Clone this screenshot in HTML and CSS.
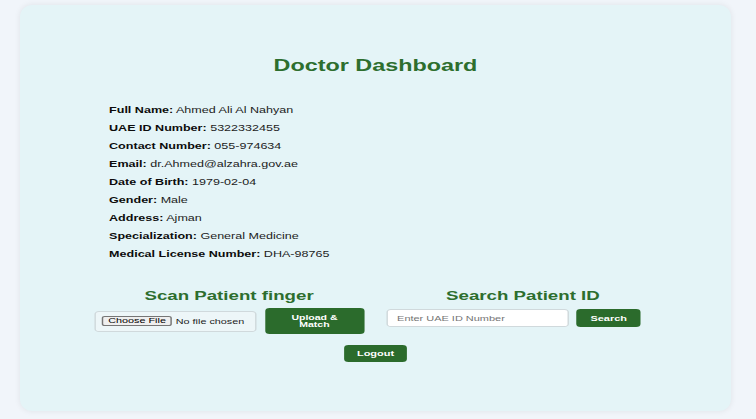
FILE: index.html
```html
<!DOCTYPE html>
<html>
<head>
<meta charset="utf-8">
<link rel="stylesheet" href="styles.css">
</head>
<body>
<div class="card">
  <div class="content">
    <h1 class="title">Doctor Dashboard</h1>
    <div class="info">
      <p><b>Full Name:</b> Ahmed Ali Al Nahyan</p>
      <p><b>UAE ID Number:</b> 5322332455</p>
      <p><b>Contact Number:</b> 055-974634</p>
      <p><b>Email:</b> dr.Ahmed@alzahra.gov.ae</p>
      <p><b>Date of Birth:</b> 1979-02-04</p>
      <p><b>Gender:</b> Male</p>
      <p><b>Address:</b> Ajman</p>
      <p><b>Specialization:</b> General Medicine</p>
      <p><b>Medical License Number:</b> DHA-98765</p>
    </div>
    <div class="sections">
      <div class="section left">
        <h2>Scan Patient finger</h2>
        <div class="row">
          <div class="file"><span class="choose">Choose File</span><span class="nofile">No file chosen</span></div>
          <button class="btn upload">Upload &amp;<br>Match</button>
        </div>
      </div>
      <div class="section right">
        <h2>Search Patient ID</h2>
        <div class="row">
          <input class="search-input" type="text" placeholder="Enter UAE ID Number">
          <button class="btn search">Search</button>
        </div>
      </div>
    </div>
    <div class="logout-row"><button class="btn logout">Logout</button></div>
  </div>
</div>
</body>
</html>
```
FILE: styles.css
```css
html, body {
  margin: 0;
  padding: 0;
  background: #f1f5fa;
  font-family: "Liberation Sans", Arial, sans-serif;
}
body {
  padding: 5px 25px 8px 20px;
}
.card {
  background: #e4f4f7;
  border-radius: 12px;
  box-shadow: 0 0 6px rgba(0, 0, 0, 0.08);
  height: 406px;
  box-sizing: border-box;
  padding-top: 52px;
  overflow: hidden;
}
/* the reference is rendered horizontally stretched */
.content {
  width: 487px;
  transform: scaleX(1.46);
  transform-origin: 0 0;
}
.title {
  margin: 0;
  text-align: center;
  color: #2d6e2e;
  font-size: 16px;
  font-weight: bold;
  line-height: 18px;
}
.info {
  margin-top: 26px;
  padding-left: 61px;
}
.info p {
  margin: 0;
  font-size: 8.6px;
  line-height: 18px;
  color: #1c1c1c;
}
.info b {
  color: #0c0c0c;
}
.sections {
  display: flex;
  margin-top: 25px;
  padding-left: 50.7px;
}
.section {
  display: flex;
  flex-direction: column;
}
.section h2 {
  margin: 0;
  color: #2d6e2e;
  font-size: 12.8px;
  line-height: 15px;
  text-align: center;
}
.left {
  width: 185px;
}
.right {
  width: 186px;
  margin-left: 15.8px;
}
.row {
  display: flex;
  align-items: center;
}
.left .row {
  gap: 5.5px;
  margin-top: 5px;
}
.right .row {
  gap: 4.8px;
  margin-top: 6px;
}
.file {
  width: 111.6px;
  height: 21px;
  box-sizing: border-box;
  border: 1px solid #d0d9dc;
  border-radius: 3px;
  background: #edf6f8;
  display: flex;
  align-items: center;
  padding-left: 4.3px;
  font-size: 7.4px;
  color: #222;
}
.choose {
  background: #efefef;
  border: 1px solid #767676;
  border-radius: 2px;
  padding: 0 3.5px;
  height: 8px;
  line-height: 8px;
  color: #000;
  margin-right: 2.3px;
}
.btn {
  background: #2b6b2c;
  color: #fff;
  border: none;
  border-radius: 3px;
  font-family: "Liberation Sans", Arial, sans-serif;
  font-weight: bold;
  font-size: 7.5px;
  padding: 0;
  cursor: pointer;
}
.upload {
  width: 67.8px;
  height: 26px;
  font-size: 7.2px;
  line-height: 7.5px;
}
.search-input {
  width: 124.7px;
  height: 18px;
  box-sizing: border-box;
  border: 1px solid #d0d9dc;
  border-radius: 3px;
  background: #fff;
  padding: 0 5.8px;
  font-size: 7.5px;
  font-family: "Liberation Sans", Arial, sans-serif;
}
.search-input::placeholder {
  color: #757575;
}
.search {
  width: 44.5px;
  height: 18px;
}
.logout-row {
  display: flex;
  justify-content: center;
  margin-top: 10.7px;
}
.logout {
  width: 43px;
  height: 17px;
}
```
